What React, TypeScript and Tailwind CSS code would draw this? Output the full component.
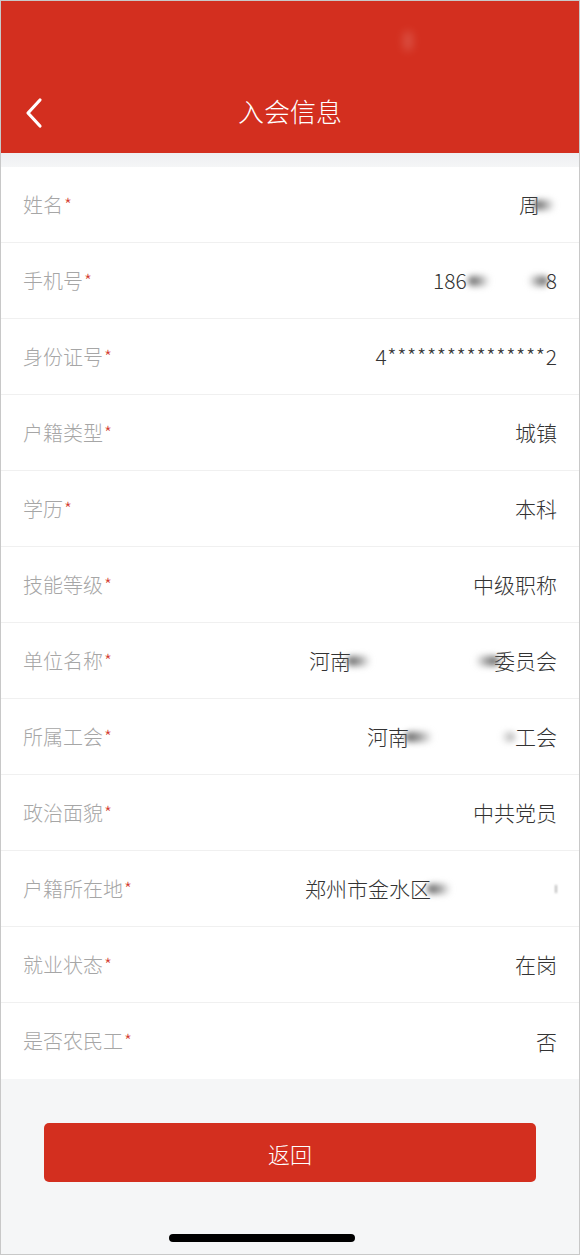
import React from 'react';

const Smudge: React.FC<{ w: number; dir?: 'r' | 'l'; className?: string }> = ({ w, dir = 'r', className = '' }) => (
  <span
    className={`inline-block h-[10px] rounded-full blur-[3px] ${dir === 'r' ? 'bg-gradient-to-r' : 'bg-gradient-to-l'} from-[#5a5a5a] via-[#9a9a9a] to-transparent ${className}`}
    style={{ width: w }}
  />
);

interface Row {
  label: string;
  value: React.ReactNode;
}

const rows: Row[] = [
  {
    label: '姓名',
    value: (
      <span className="flex items-center">
        周<Smudge w={22} className="-ml-[7px] mr-[2px]" />
      </span>
    ),
  },
  {
    label: '手机号',
    value: (
      <span className="flex items-center">
        186<Smudge w={22} className="ml-[1px]" />
        <span className="w-[38px]" />
        <Smudge w={20} dir="l" className="-mr-[2px]" />8
      </span>
    ),
  },
  { label: '身份证号', value: <span className="tracking-[0.6px] -mr-[0.6px]">4****************2</span> },
  { label: '户籍类型', value: '城镇' },
  { label: '学历', value: '本科' },
  { label: '技能等级', value: '中级职称' },
  {
    label: '单位名称',
    value: (
      <span className="flex items-center">
        河南<Smudge w={24} className="-ml-[4px]" />
        <span className="w-[104px]" />
        <Smudge w={24} dir="l" className="-mr-[5px]" />委员会
      </span>
    ),
  },
  {
    label: '所属工会',
    value: (
      <span className="flex items-center">
        河南<Smudge w={28} className="-ml-[4px]" />
        <span className="w-[68px]" />
        <Smudge w={14} dir="l" className="opacity-50" />工会
      </span>
    ),
  },
  { label: '政治面貌', value: '中共党员' },
  {
    label: '户籍所在地',
    value: (
      <span className="flex items-center">
        郑州市金水区<Smudge w={24} className="-ml-[4px]" />
        <span className="w-[104px]" />
        <span className="inline-block w-[2px] h-[8px] bg-[#bbb] blur-[1px]" />
      </span>
    ),
  },
  { label: '就业状态', value: '在岗' },
  { label: '是否农民工', value: '否' },
];

export default function App() {
  return (
    <div
      className="w-[580px] h-[1255px] overflow-hidden border border-[#c8c8c8] bg-[#f5f6f7] flex flex-col"
      style={{ fontFamily: '"Noto Sans CJK SC", "Noto Sans", sans-serif' }}
    >
      {/* header */}
      <div className="bg-[#d32f1f] h-[152px] flex flex-col shrink-0">
        <div className="h-[70px] relative">
          <span className="absolute left-[402px] top-[30px] w-[10px] h-[20px] rounded-full bg-[#ffffff] opacity-15 blur-[4px]" />
        </div>
        <div className="h-[82px] flex items-center relative">
          <svg className="absolute left-[22px] top-[26px]" width="22" height="32" viewBox="0 0 22 32" fill="none">
            <path d="M17 3 L5 16 L17 29" stroke="white" strokeWidth="3.2" strokeLinecap="round" strokeLinejoin="round" />
          </svg>
          <div className="w-full text-center text-white text-[26px] font-light leading-none -mt-[2px]">入会信息</div>
        </div>
      </div>

      <div className="h-[14px] bg-gradient-to-b from-[#eeeff1] to-[#f5f6f7] shrink-0" />

      {/* info list */}
      <div className="bg-white">
        {rows.map((r, i) => (
          <div
            key={r.label}
            className={`h-[76px] flex items-center justify-between pl-[22px] pr-[22px] ${i < rows.length - 1 ? 'border-b border-[#f0f0f0]' : ''}`}
          >
            <div className="text-[20px] text-[#a6a6a6] font-light leading-none flex items-start">
              {r.label}
              <span className="text-[#d23a2c] text-[18px] leading-none ml-[1px]">*</span>
            </div>
            <div className="text-[21px] text-[#333333] font-light leading-none">{r.value}</div>
          </div>
        ))}
      </div>

      <div className="pt-[44px] px-[43px]">
        <button className="w-full h-[59px] rounded-[5px] bg-[#d32f1f] text-white text-[22px] font-light leading-none">返回</button>
      </div>

      <div className="mt-[52px] ml-[168px] w-[186px] h-[8px] rounded-full bg-black" />
    </div>
  );
}
